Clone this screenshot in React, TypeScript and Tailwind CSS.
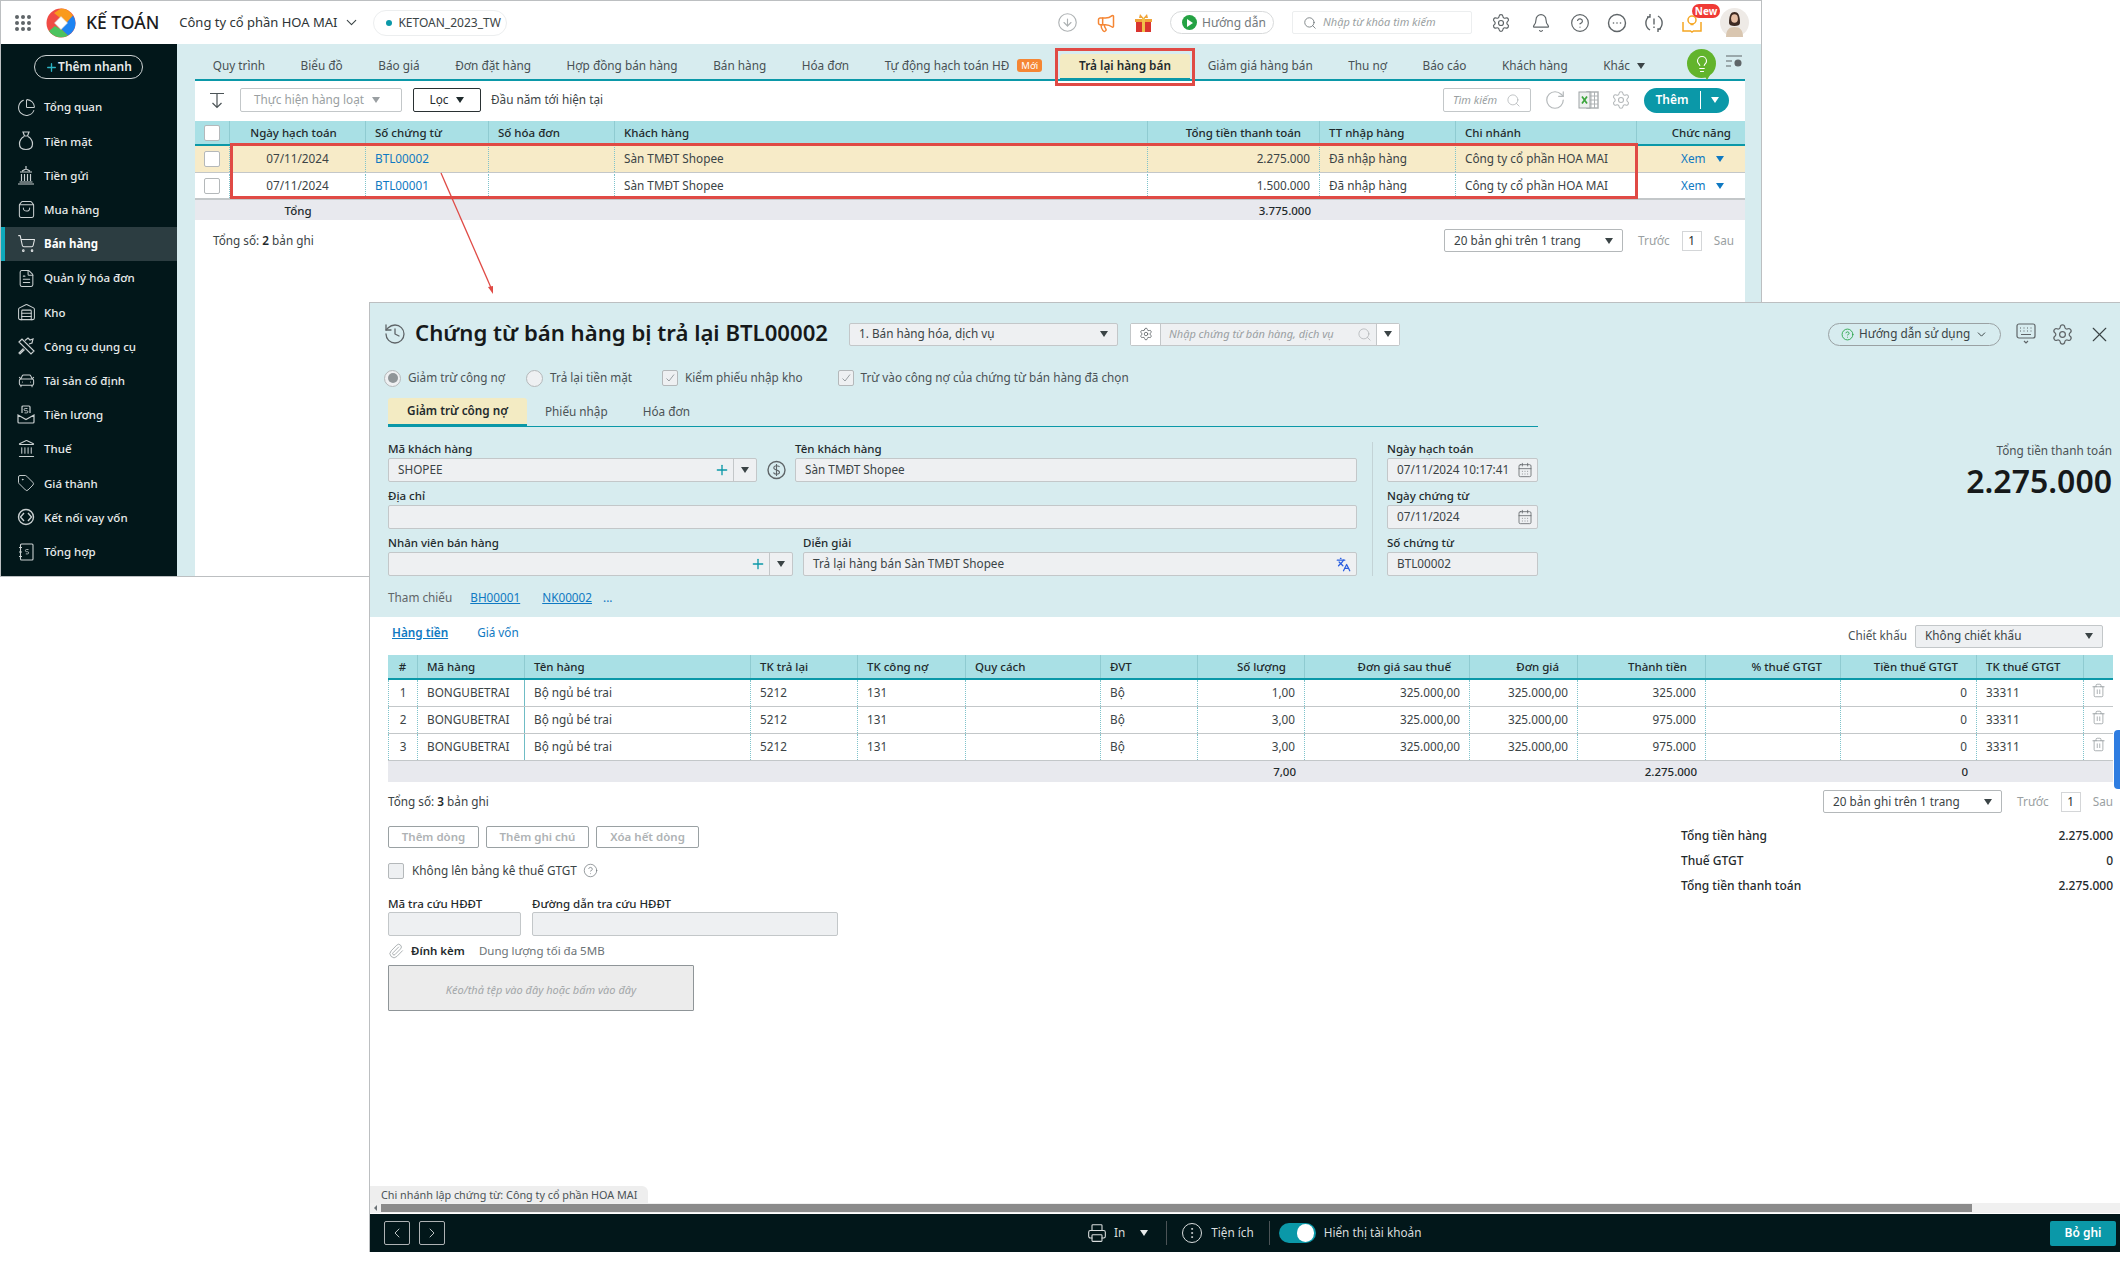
import { Bell, CalendarDays, CarFront, ChartPie, ChevronDown, ChevronLeft, ChevronRight, CircleArrowDown, CircleHelp, EllipsisVertical, FileText, History, Landmark, Languages, Lightbulb, Megaphone, Paperclip, Plus, Printer, RotateCw, Search, Settings, ShoppingBag, ShoppingCart, Tag, Trash2, Warehouse, X } from 'lucide-react'
import type { ReactNode } from 'react'

const thin = 1.3

function MoneyBag() {
  return (
    <svg width="16" height="20" viewBox="0 0 16 20" fill="none" stroke="#c9cfd0" strokeWidth="1.2">
      <path d="M5 1h6l-1.500 4h-3z" />
      <path d="M6 5.500C2.500 7.500 1.500 10.500 1.500 13c0 3.500 2.500 5.500 6.500 5.500s6.500-2 6.500-5.500c0-2.500-1-5.500-4.500-7.500" />
    </svg>
  )
}

function BankTower() {
  return (
    <svg width="18" height="20" viewBox="0 0 18 20" fill="none" stroke="#c9cfd0" strokeWidth="1.2">
      <path d="M9 1v3M3 7h12M5 6l4-2 4 2M4.500 9v7M7.500 9v7M10.500 9v7M13.500 9v7M2.500 17h13M1 19h16" />
    </svg>
  )
}

function HammerWrench() {
  return (
    <svg width="18" height="18" viewBox="0 0 18 18" fill="none" stroke="#c9cfd0" strokeWidth="1.2">
      <path d="M2 5l3-3 12 12-3 3zM8 3.500L11 1l2 2 3-1-1 4-3 1M6.500 11.500L2 16l1 1 4.500-4.500" />
    </svg>
  )
}

function SalaryBox() {
  return (
    <svg width="18" height="19" viewBox="0 0 18 19" fill="none" stroke="#c9cfd0" strokeWidth="1.2">
      <path d="M5 8V2a1 1 0 0 1 1-1h6a1 1 0 0 1 1 1v6" />
      <path d="M1 10v7a1 1 0 0 0 1 1h14a1 1 0 0 0 1-1v-7l-8 4.500z" />
      <path d="M10.500 3.500H8.200a1 1 0 0 0 0 2.200h1.600a1 1 0 0 1 0 2.200H7.500" strokeWidth="0.9" />
    </svg>
  )
}

function LoanLink() {
  return (
    <svg width="18" height="18" viewBox="0 0 18 18" fill="none" stroke="#c9cfd0" strokeWidth="1.4">
      <circle cx="9" cy="9" r="7.500" />
      <path d="M7 5L3.500 9 7 13M11 5l3.500 4-3.500 4" />
    </svg>
  )
}

function LedgerBook() {
  return (
    <svg width="16" height="18" viewBox="0 0 16 18" fill="none" stroke="#c9cfd0" strokeWidth="1.1">
      <rect x="2.500" y="1" width="12.500" height="16" rx="1" />
      <path d="M1 4.500h3M1 9h3M1 13.500h3" />
      <path d="M10.500 6.500H8.500a1 1 0 0 0 0 2.200h1a1 1 0 0 1 0 2.200H7.800" strokeWidth="0.8" />
    </svg>
  )
}

function Logo() {
  return (
    <svg width="30" height="30" viewBox="0 0 30 30">
      <circle cx="15" cy="15" r="14.500" fill="#f04b45" />
      <path d="M15 .5A14.500 14.500 0 0 1 27 8L20.500 15 8 5z" fill="#f99a1c" />
      <path d="M29.500 15A14.500 14.500 0 0 1 22 27.500L15 21l12-13.500a14 14 0 0 1 2.500 7.500z" fill="#1d84f2" />
      <path d="M22 27.500A14.500 14.500 0 0 1 3 23l6-5 7 4z" fill="#4cc35f" />
      <path d="M15 8.500l6.500 6.500-6.500 6.500L8.500 15z" fill="#fff" stroke="#d8d8d8" strokeWidth=".6" />
    </svg>
  )
}

function Avatar() {
  return (
    <svg width="29" height="29" viewBox="0 0 29 29">
      <circle cx="14.500" cy="14.500" r="14.500" fill="#eeeae6" />
      <path d="M9 15c0-8 2-11 5.500-11S20 7 20 15c0 2-2 3-5.500 3S9 17 9 15z" fill="#3d2a22" />
      <ellipse cx="14.500" cy="10.500" rx="3.400" ry="4.300" fill="#e6bfa5" />
      <path d="M6 29c0-7 3-10 8.500-10S23 22 23 29z" fill="#d9c6b0" />
    </svg>
  )
}

const SIDE = [
  { label: 'Tổng quan', icon: <ChartPie size={19} strokeWidth={thin} color="#c9cfd0" /> },
  { label: 'Tiền mặt', icon: <MoneyBag /> },
  { label: 'Tiền gửi', icon: <BankTower /> },
  { label: 'Mua hàng', icon: <ShoppingBag size={19} strokeWidth={thin} color="#c9cfd0" /> },
  { label: 'Bán hàng', icon: <ShoppingCart size={19} strokeWidth={thin} color="#e5e8e8" />, active: true },
  { label: 'Quản lý hóa đơn', icon: <FileText size={19} strokeWidth={thin} color="#c9cfd0" /> },
  { label: 'Kho', icon: <Warehouse size={19} strokeWidth={thin} color="#c9cfd0" /> },
  { label: 'Công cụ dụng cụ', icon: <HammerWrench /> },
  { label: 'Tài sản cố định', icon: <CarFront size={19} strokeWidth={thin} color="#c9cfd0" /> },
  { label: 'Tiền lương', icon: <SalaryBox /> },
  { label: 'Thuế', icon: <Landmark size={19} strokeWidth={thin} color="#c9cfd0" /> },
  { label: 'Giá thành', icon: <Tag size={18} strokeWidth={thin} color="#c9cfd0" /> },
  { label: 'Kết nối vay vốn', icon: <LoanLink /> },
  { label: 'Tổng hợp', icon: <LedgerBook /> },
]

const TABS = ['Quy trình', 'Biểu đồ', 'Báo giá', 'Đơn đặt hàng', 'Hợp đồng bán hàng', 'Bán hàng', 'Hóa đơn']
const TABS_AFTER = ['Giảm giá hàng bán', 'Thu nợ', 'Báo cáo', 'Khách hàng']

const BACK_ROWS = [
  { no: 'BTL00002', amount: '2.275.000', bg: 'bg-[#f7ebc8]' },
  { no: 'BTL00001', amount: '1.500.000', bg: 'bg-white' },
]

const ITEM_ROWS = [
  { n: 1, qty: '1,00', total: '325.000' },
  { n: 2, qty: '3,00', total: '975.000' },
  { n: 3, qty: '3,00', total: '975.000' },
]

const backCols = 'grid grid-cols-[35px_136px_123px_126px_533px_172px_136px_181px_107px]'
const itemCols = 'grid grid-cols-[30px_107px_226px_107px_108px_135px_97px_107px_165px_108px_128px_135px_136px_107px_29px]'
const headCell = 'flex items-center pl-[9px] border-r border-[#8fcbd1] text-[11.500px] font-medium text-[#1f2a2c]'
const headRight = 'flex items-center justify-end pr-[18px] border-r border-[#8fcbd1] text-[11.500px] font-medium text-[#1f2a2c]'
const bodyCell = 'flex items-center pl-[9px] border-r border-dotted border-[#7fc3cb] text-[#3b4446]'
const bodyRight = 'flex items-center justify-end pr-[9px] border-r border-dotted border-[#7fc3cb] text-[#3b4446]'
const bodyMid = 'flex items-center justify-center border-r border-dotted border-[#7fc3cb] text-[#3b4446]'

function Caret({ className = 'border-t-[#3b4446]' }: { className?: string }) {
  return <span className={`inline-block w-0 h-0 border-x-[4px] border-x-transparent border-t-[6px] ${className}`} />
}

function Pager() {
  return (
    <div className="flex items-center text-[11.750px] text-[#3b4446]">
      <div className="flex items-center justify-between h-[23px] w-[179px] border border-[#b4b8ba] rounded-[2px] px-[9px] bg-white">
        <span>20 bản ghi trên 1 trang</span>
        <Caret />
      </div>
      <span className="ml-[15px] text-[#9a9fa2]">Trước</span>
      <span className="ml-[12px] w-[20px] h-[20px] flex items-center justify-center border border-[#d4d6d8] text-[#1f2a2c]">1</span>
      <span className="ml-[12px] text-[#9a9fa2]">Sau</span>
    </div>
  )
}

function Field({ label, className, children }: { label: string; className?: string; children?: ReactNode }) {
  return (
    <div className={className}>
      <div className="h-[16px] leading-[14px] text-[11.500px] font-medium text-[#1f2a2c]">{label}</div>
      <div className="flex items-center h-[24px] bg-[#eef0f2] border border-[#c3c7c9] rounded-[2px] text-[11.750px] text-[#3b4446]">
        {children}
      </div>
    </div>
  )
}

function TopBar() {
  return (
    <div className="flex items-center h-[43px] bg-white pl-[14px] pr-[12px] text-[#3b4446]">
      <div className="grid grid-cols-3 gap-[2px] w-[16px]">
        {[...Array(9)].map((_, i) => (
          <span key={i} className="w-[4px] h-[4px] rounded-full bg-[#5f6568]" />
        ))}
      </div>
      <div className="ml-[15px]"><Logo /></div>
      <span className="ml-[10px] text-[17.500px] font-medium text-[#1c1c1c]">KẾ TOÁN</span>
      <span className="ml-[20px] text-[13px] text-[#2d3436]">Công ty cổ phần HOA MAI</span>
      <ChevronDown size={17} strokeWidth={1.5} className="ml-[6px]" />
      <div className="ml-[13px] flex items-center h-[26px] w-[134px] border border-[#eceeef] rounded-full pl-[12px] text-[12px]">
        <span className="w-[6px] h-[6px] rounded-full bg-[#0b98a8]" />
        <span className="ml-[6px]">KETOAN_2023_TW</span>
      </div>
      <CircleArrowDown size={21} strokeWidth={1.3} color="#aeb2b4" className="ml-auto" />
      <Megaphone size={20} strokeWidth={1.8} color="#f58634" className="ml-[18px]" />
      <svg width="19" height="20" viewBox="0 0 19 20" className="ml-[18px]">
        <path d="M1 6h17v3H1z" fill="#f0a43a" />
        <path d="M2 9h15v10H2z" fill="#d9342f" />
        <path d="M8 5h3v14H8z" fill="#f0c04a" />
        <path d="M9.500 5L6 1 5 5zM9.500 5L13 1l1 4z" fill="#f0a43a" />
      </svg>
      <div className="ml-[17px] flex items-center h-[23px] w-[104px] border border-[#d8dadb] rounded-full pl-[11px] text-[12px] text-[#73797c]">
        <span className="w-[15px] h-[15px] rounded-full bg-[#25a244] flex items-center justify-center">
          <span className="w-0 h-0 border-y-[4px] border-y-transparent border-l-[6px] border-l-white ml-[1px]" />
        </span>
        <span className="ml-[5px]">Hướng dẫn</span>
      </div>
      <div className="ml-[18px] flex items-center h-[23px] w-[180px] border border-[#eceeef] rounded-[2px] pl-[10px] text-[11px] italic text-[#9a9fa2]">
        <Search size={14} strokeWidth={1.4} color="#6b7276" />
        <span className="ml-[6px]">Nhập từ khóa tìm kiếm</span>
      </div>
      <Settings size={20} strokeWidth={1.4} color="#5f6568" className="ml-[19px]" />
      <Bell size={20} strokeWidth={1.4} color="#5f6568" className="ml-[20px]" />
      <CircleHelp size={20} strokeWidth={1.4} color="#5f6568" className="ml-[19px]" />
      <svg width="20" height="20" viewBox="0 0 20 20" fill="none" stroke="#5f6568" strokeWidth="1.4" className="ml-[17px]">
        <circle cx="10" cy="10" r="8.500" />
        <circle cx="6.500" cy="10" r=".8" fill="#5f6568" stroke="none" />
        <circle cx="10" cy="10" r=".8" fill="#5f6568" stroke="none" />
        <circle cx="13.500" cy="10" r=".8" fill="#5f6568" stroke="none" />
      </svg>
      <svg width="20" height="20" viewBox="0 0 20 20" fill="none" stroke="#5f6568" strokeWidth="1.4" className="ml-[17px]">
        <path d="M6 3a8 8 0 0 0 0 14M14 3a8 8 0 0 1 0 14M6 1v3H3M14 19v-3h3M10 5.500v6M10 13.500v1.500" />
      </svg>
      <div className="relative ml-[18px] mr-[19px] w-[19px] h-[20px]">
        <svg width="20" height="20" viewBox="0 0 20 20" fill="none" stroke="#f5a623" strokeWidth="1.5">
          <circle cx="10" cy="7" r="4" />
          <path d="M8.500 11.500h3M1 9v9h7.500l1.500 1 1.500-1H19V9" />
        </svg>
        <span className="absolute left-[10px] top-[-9px] w-[28px] h-[14px] rounded-full bg-[#f03a35] text-white text-[10px] font-bold leading-[14px] text-center">New</span>
      </div>
      <Avatar />
    </div>
  )
}

function Sidebar() {
  return (
    <aside className="w-[176px] bg-[#02171a] text-[#e8ebeb] text-[11.500px] font-medium flex flex-col">
      <div className="h-[24px] mt-[11px] ml-[33px] w-[109px] border border-[#cfd4d5] rounded-full flex items-center justify-center text-[12px] font-semibold">
        <Plus size={13} strokeWidth={2.5} color="#2cb4c4" />
        <span>Thêm nhanh</span>
      </div>
      <div className="mt-[11px] flex flex-col">
        {SIDE.map(item => (
          <div
            key={item.label}
            className={
              item.active
                ? 'flex items-center h-[34.200px] bg-[#2c3d41] border-l-[4px] border-[#0fa9bb] pl-[11px] font-bold text-white'
                : 'flex items-center h-[34.200px] pl-[15px]'
            }
          >
            <span className="w-[20px] flex justify-center">{item.icon}</span>
            <span className="ml-[8px]">{item.label}</span>
          </div>
        ))}
      </div>
    </aside>
  )
}

function BackWindow() {
  return (
    <div className="relative w-[1762px] h-[577px] border border-[#bcbfc1] flex flex-col overflow-hidden">
      <TopBar />
      <div className="flex flex-1 min-h-0">
        <Sidebar />
        <div className="flex-1 bg-[#d7ecef] pl-[18px] pr-[16px] flex flex-col">
          <div className="flex items-end h-[37px] border-b-[2px] border-[#0b98a8] text-[11.800px] text-[#485154] whitespace-nowrap">
            {TABS.map(t => (
              <div key={t} className="h-[27px] flex items-center px-[17.750px]">{t}</div>
            ))}
            <div className="h-[27px] flex items-center px-[17.750px]">
              Tự động hạch toán HĐ
              <span className="ml-[8px] px-[4px] h-[13px] leading-[13px] rounded-[3px] bg-[#f58634] text-white text-[9.500px]">Mới</span>
            </div>
            <div className="h-[27px] w-[130px] flex items-center justify-center bg-[#f3ebc3] rounded-t-[3px] border-b-[3px] border-[#0b98a8] mb-[-2px] font-semibold text-[#1f2a2c]">Trả lại hàng bán</div>
            {TABS_AFTER.map(t => (
              <div key={t} className="h-[27px] flex items-center px-[17.750px]">{t}</div>
            ))}
            <div className="h-[27px] flex items-center pl-[17.750px]">
              Khác
              <Caret className="ml-[7px] border-t-[#3b4446]" />
            </div>
            <div className="relative h-[31px] mb-[-1px] ml-auto w-[29px]">
              <span className="flex items-center justify-center w-[29px] h-[29px] rounded-full bg-[#62b42c]">
                <Lightbulb size={18} strokeWidth={1.5} color="#fff" />
              </span>
              <span className="absolute left-[17px] bottom-[0px] w-0 h-0 border-x-[3px] border-x-transparent border-t-[5px] border-t-[#62b42c]" />
            </div>
            <svg width="18" height="14" viewBox="0 0 18 14" fill="none" stroke="#5f6568" strokeWidth="1.1" className="ml-[9px] mr-[2px] mb-[10px]">
              <path d="M1 1h16M1 6h6M1 11h5" />
              <circle cx="13" cy="8" r="3" fill="#5f6568" />
            </svg>
          </div>
          <div className="flex-1 bg-white flex flex-col">
            <div className="flex items-center h-[40px] pb-[2px] text-[11.750px]">
              <svg width="16" height="17" viewBox="0 0 16 17" fill="none" stroke="#4b5356" strokeWidth="1.2" className="ml-[14px]">
                <path d="M1 1.500h14M8 1.500v14M3.500 11l4.500 4.500 4.500-4.500" />
              </svg>
              <div className="ml-[15px] flex items-center justify-center h-[24px] w-[162px] pr-[8px] border border-[#c3c7c9] rounded-[2px] text-[#9a9fa2]">
                Thực hiện hàng loạt
                <Caret className="ml-[8px] border-t-[#9a9fa2]" />
              </div>
              <div className="ml-[11px] flex items-center justify-center h-[24px] w-[68px] border border-[#2a3133] rounded-[2px] text-[#1f2a2c]">
                Lọc
                <Caret className="ml-[8px] border-t-[#1f2a2c]" />
              </div>
              <span className="ml-[10px] text-[#3b4446]">Đầu năm tới hiện tại</span>
              <div className="ml-auto flex items-center justify-between h-[24px] w-[88px] border border-[#c3c7c9] rounded-[2px] px-[9px] text-[11px] italic text-[#9a9fa2]">
                Tìm kiếm
                <Search size={15} strokeWidth={1.2} color="#aeb2b4" />
              </div>
              <RotateCw size={22} strokeWidth={1.3} color="#b4b8ba" className="ml-[13px]" />
              <svg width="21" height="20" viewBox="0 0 21 20" className="ml-[12px]">
                <rect x="9" y="2" width="11" height="16" fill="none" stroke="#aeb2b4" strokeWidth="1.500" />
                <path d="M13 2v16M16.500 2v16M9 6h11M9 10h11M9 14h11" stroke="#aeb2b4" />
                <rect x="1" y="2" width="11" height="16" fill="#eef0f0" stroke="#9ea3a5" />
                <path d="M4 6.500l5 7M9 6.500l-5 7" stroke="#3ba53b" strokeWidth="1.700" />
              </svg>
              <Settings size={20} strokeWidth={1.3} color="#b4b8ba" className="ml-[12px]" />
              <div className="ml-[13px] mr-[16px] flex items-center h-[25px] w-[85px] rounded-full bg-[#0b98a8] text-[12px] text-white font-semibold">
                <span className="w-[57px] text-center border-r border-white">Thêm</span>
                <Caret className="ml-[10px] border-t-white" />
              </div>
            </div>
            <div className="relative text-[11.750px]">
              <div className={`${backCols} h-[25px] bg-[#a9e0e5] border-b-[2px] border-[#0b98a8]`}>
                <div className="flex items-center justify-center border-r border-[#8fcbd1]">
                  <span className="w-[16px] h-[16px] bg-white border border-[#b4b8ba] rounded-[2px]" />
                </div>
                <div className="flex items-center justify-center pr-[8px] border-r border-[#8fcbd1] text-[11.500px] font-medium text-[#1f2a2c]">Ngày hạch toán</div>
                <div className={headCell}>Số chứng từ</div>
                <div className={headCell}>Số hóa đơn</div>
                <div className={headCell}>Khách hàng</div>
                <div className={headRight}>Tổng tiền thanh toán</div>
                <div className={headCell}>TT nhập hàng</div>
                <div className={headCell}>Chi nhánh</div>
                <div className="flex items-center justify-end pr-[13px] text-[11.500px] font-medium text-[#1f2a2c]">Chức năng</div>
              </div>
              {BACK_ROWS.map(r => (
                <div key={r.no} className={`${backCols} h-[26.500px] pt-[1px] border-b border-[#c3c7c9] ${r.bg}`}>
                  <div className={bodyMid}>
                    <span className="w-[16px] h-[16px] bg-white border border-[#b4b8ba] rounded-[2px]" />
                  </div>
                  <div className={bodyMid}>07/11/2024</div>
                  <div className="flex items-center pl-[9px] border-r border-dotted border-[#7fc3cb] text-[#0f79c2]">{r.no}</div>
                  <div className={bodyCell} />
                  <div className={bodyCell}>Sàn TMĐT Shopee</div>
                  <div className={bodyRight}>{r.amount}</div>
                  <div className={bodyCell}>Đã nhập hàng</div>
                  <div className={bodyCell}>Công ty cổ phần HOA MAI</div>
                  <div className="flex items-center pl-[44px] text-[#0f79c2]">
                    Xem
                    <Caret className="ml-[10px] border-t-[#0f79c2]" />
                  </div>
                </div>
              ))}
              <div className={`${backCols} h-[21px] pt-[1px] bg-[#e8e9ee] border-t border-[#c3c7c9] text-[11.500px] font-medium text-[#1f2a2c]`}>
                <div />
                <div className="flex items-center justify-center">Tổng</div>
                <div />
                <div />
                <div />
                <div className="flex items-center justify-end pr-[9px]">3.775.000</div>
              </div>
              {/* annotation frame round the two rows */}
              <div className="absolute left-[35px] top-[22px] w-[1408px] h-[56px] border-[3px] border-[#e04a45]" />
            </div>
            <div className="flex items-center justify-between mt-[9px] pl-[18px] pr-[11px] text-[11.750px] text-[#3b4446]">
              <span>Tổng số: <b className="font-semibold text-[#1f2a2c]">2</b> bản ghi</span>
              <Pager />
            </div>
          </div>
        </div>
      </div>
      {/* annotation frame round the active tab */}
      <div className="absolute left-[1054px] top-[47px] w-[140px] h-[38px] border-[3px] border-[#e04a45]" />
    </div>
  )
}

function FrontHeader() {
  return (
    <div className="flex items-center h-[24px] mt-[19px]">
      <History size={24} strokeWidth={1.3} color="#5f6568" className="ml-[-5px]" />
      <span className="ml-[8px] mb-[5px] text-[22.150px] font-semibold leading-[24px] text-[#16191a]">Chứng từ bán hàng bị trả lại BTL00002</span>
      <div className="ml-[21px] flex items-center justify-between w-[269px] h-[23px] bg-[#eef0f2] border border-[#c3c7c9] rounded-[2px] px-[9px] text-[11.750px] text-[#3b4446]">
        1. Bán hàng hóa, dịch vụ
        <Caret />
      </div>
      <div className="ml-[12px] flex items-center h-[23px] w-[270px] bg-[#eef0f2] border border-[#c3c7c9] rounded-[2px] text-[11px] italic text-[#9a9fa2]">
        <span className="flex items-center justify-center w-[30px] h-full bg-white border-r border-[#c3c7c9]">
          <Settings size={14} strokeWidth={1.4} color="#5f6568" />
        </span>
        <span className="ml-[8px] flex-1">Nhập chứng từ bán hàng, dịch vụ</span>
        <Search size={15} strokeWidth={1.2} color="#aeb2b4" />
        <span className="ml-[4px] flex items-center justify-center w-[23px] h-full bg-white border-l border-[#c3c7c9]">
          <Caret />
        </span>
      </div>
      <div className="ml-auto flex items-center h-[23px] w-[173px] border border-[#9aa1a3] rounded-full pl-[12px] text-[11.750px] text-[#3b4446]">
        <CircleHelp size={13} strokeWidth={1.6} color="#25a244" />
        <span className="ml-[5px]">Hướng dẫn sử dụng</span>
        <ChevronDown size={13} strokeWidth={1.8} className="ml-[5px]" />
      </div>
      <svg width="20" height="22" viewBox="0 0 20 22" fill="none" stroke="#5f6568" strokeWidth="1.2" className="ml-[15px]">
        <rect x="1" y="1" width="18" height="14" rx="2" />
        <path d="M4 5h1M7.500 5h1M11 5h1M14.500 5h1M4 8h1M7.500 8h1M11 8h1M14.500 8h1M5 11.500h10M8 18l2 2 2-2" />
      </svg>
      <Settings size={23} strokeWidth={1.3} color="#5f6568" className="ml-[15px]" />
      <X size={25} strokeWidth={1.1} color="#3b4446" className="ml-[13px]" />
    </div>
  )
}

function Check({ label, className }: { label: string; className: string }) {
  return (
    <div className={`flex items-center ${className}`}>
      <span className="flex items-center justify-center w-[16px] h-[16px] bg-[#eef0f2] border border-[#b4b8ba] rounded-[2px]">
        <svg width="10" height="10" viewBox="0 0 10 10" fill="none" stroke="#8f9598" strokeWidth="0.9"><path d="M1.500 5.500l2.500 2.500 5-6.500" /></svg>
      </span>
      <span className="ml-[7px]">{label}</span>
    </div>
  )
}

function FrontForm() {
  return (
    <div className="w-[1150px]">
      <div className="flex items-center h-[16px] mt-[24px] ml-[-4px] text-[11.750px] text-[#4b5356]">
        <span className="flex items-center justify-center w-[17px] h-[17px] rounded-full border border-[#b4b8ba] bg-[#eef0f2]">
          <span className="w-[10px] h-[10px] rounded-full bg-[#8f9598]" />
        </span>
        <span className="ml-[7px]">Giảm trừ công nợ</span>
        <span className="ml-[21px] w-[17px] h-[17px] rounded-full border border-[#b4b8ba] bg-[#eef0f2]" />
        <span className="ml-[7px]">Trả lại tiền mặt</span>
        <Check label="Kiểm phiếu nhập kho" className="ml-[30px]" />
        <Check label="Trừ vào công nợ của chứng từ bán hàng đã chọn" className="ml-[35px]" />
      </div>
      <div className="flex items-end h-[29px] mt-[12px] border-b border-[#0b98a8] text-[11.750px] text-[#4b5356]">
        <div className="flex items-center justify-center h-[29px] w-[139px] bg-[#f3ebc3] rounded-t-[3px] border-b-[3px] border-[#0b98a8] mb-[-1px] font-semibold text-[#1f2a2c]">Giảm trừ công nợ</div>
        <div className="h-[28px] flex items-center ml-[18px]">Phiếu nhập</div>
        <div className="h-[28px] flex items-center ml-[35px]">Hóa đơn</div>
      </div>
      <div className="flex mt-[15px]">
        <div className="w-[969px] flex flex-col">
          <div className="flex">
            <Field label="Mã khách hàng" className="w-[369px]">
              <span className="flex-1 pl-[9px]">SHOPEE</span>
              <Plus size={16} strokeWidth={2} color="#0b98a8" className="mr-[3px]" />
              <span className="flex items-center justify-center w-[23px] h-full border-l border-[#c3c7c9]"><Caret /></span>
            </Field>
            <div className="w-[38px] flex justify-center items-end pb-[2px]">
              <svg width="19" height="20" viewBox="0 0 19 20" fill="none" stroke="#5f6568">
                <circle cx="9.500" cy="10" r="8.500" strokeWidth="1.400" />
                <path d="M12.500 7c-.5-1.500-5.500-2-5.700.7C6.600 10.500 12.600 9.500 12.500 12.500c-.1 2.500-5.500 2-6 0M9.500 4v12" strokeWidth="1.100" />
              </svg>
            </div>
            <Field label="Tên khách hàng" className="w-[562px]">
              <span className="pl-[9px]">Sàn TMĐT Shopee</span>
            </Field>
          </div>
          <Field label="Địa chỉ" className="mt-[7px]" />
          <div className="flex mt-[7px]">
            <Field label="Nhân viên bán hàng" className="w-[405px]">
              <span className="flex-1" />
              <Plus size={16} strokeWidth={2} color="#0b98a8" className="mr-[3px]" />
              <span className="flex items-center justify-center w-[23px] h-full border-l border-[#c3c7c9]"><Caret /></span>
            </Field>
            <Field label="Diễn giải" className="ml-[10px] w-[554px]">
              <span className="flex-1 pl-[9px]">Trả lại hàng bán Sàn TMĐT Shopee</span>
              <Languages size={15} strokeWidth={2} color="#2a5fe0" className="mr-[5px]" />
            </Field>
          </div>
        </div>
        <div className="ml-[15px] w-px bg-[#c3d3d6]" />
        <div className="ml-[14px] w-[151px] flex flex-col">
          <Field label="Ngày hạch toán">
            <span className="flex-1 pl-[9px]">07/11/2024 10:17:41</span>
            <CalendarDays size={16} strokeWidth={1.2} color="#5f6568" className="mr-[4px]" />
          </Field>
          <Field label="Ngày chứng từ" className="mt-[7px]">
            <span className="flex-1 pl-[9px]">07/11/2024</span>
            <CalendarDays size={16} strokeWidth={1.2} color="#5f6568" className="mr-[4px]" />
          </Field>
          <Field label="Số chứng từ" className="mt-[7px]">
            <span className="pl-[9px]">BTL00002</span>
          </Field>
        </div>
      </div>
      <div className="flex items-center h-[16px] mt-[14px] text-[11.750px] text-[#5f6568]">
        Tham chiếu
        <span className="ml-[18px] text-[#0f79c2] underline">BH00001</span>
        <span className="ml-[22px] text-[#0f79c2] underline">NK00002</span>
        <span className="ml-[11px] text-[#0f79c2]">...</span>
      </div>
    </div>
  )
}

function ItemsTable() {
  return (
    <div className="text-[11.750px]">
      <div className={`${itemCols} h-[25px] bg-[#a9e0e5] border-b-[2px] border-[#0b98a8]`}>
        <div className="flex items-center justify-center border-r border-[#8fcbd1] text-[11.500px] font-medium text-[#1f2a2c]">#</div>
        <div className={headCell}>Mã hàng</div>
        <div className={headCell}>Tên hàng</div>
        <div className={headCell}>TK trả lại</div>
        <div className={headCell}>TK công nợ</div>
        <div className={headCell}>Quy cách</div>
        <div className={headCell}>ĐVT</div>
        <div className={headRight}>Số lượng</div>
        <div className={headRight}>Đơn giá sau thuế</div>
        <div className={headRight}>Đơn giá</div>
        <div className={headRight}>Thành tiền</div>
        <div className={headRight}>% thuế GTGT</div>
        <div className={headRight}>Tiền thuế GTGT</div>
        <div className={headCell}>TK thuế GTGT</div>
        <div />
      </div>
      {ITEM_ROWS.map(r => (
        <div key={r.n} className={`${itemCols} h-[27px] border-b border-[#c3c7c9]`}>
          <div className={`${bodyMid} border-l`}>{r.n}</div>
          <div className="flex items-center pl-[9px] border-r border-[#6fbcc5] text-[#3b4446]">BONGUBETRAI</div>
          <div className={bodyCell}>Bộ ngủ bé trai</div>
          <div className={bodyCell}>5212</div>
          <div className={bodyCell}>131</div>
          <div className={bodyCell} />
          <div className={bodyCell}>Bộ</div>
          <div className={bodyRight}>{r.qty}</div>
          <div className={bodyRight}>325.000,00</div>
          <div className={bodyRight}>325.000,00</div>
          <div className={bodyRight}>{r.total}</div>
          <div className={bodyCell} />
          <div className={bodyRight}>0</div>
          <div className={bodyCell}>33311</div>
          <div className="flex justify-center pt-[3px]">
            <Trash2 size={15} strokeWidth={1} color="#7c8386" />
          </div>
        </div>
      ))}
      <div className={`${itemCols} h-[21px] bg-[#e8e9ee] text-[11.500px] font-medium text-[#1f2a2c]`}>
        <div className="col-start-8 flex items-center justify-end pr-[9px]">7,00</div>
        <div />
        <div />
        <div className="flex items-center justify-end pr-[9px]">2.275.000</div>
        <div />
        <div className="flex items-center justify-end pr-[9px]">0</div>
      </div>
    </div>
  )
}

function FrontWindow() {
  return (
    <div className="absolute left-[369px] top-[302px] w-[1751px] h-[950px] bg-white border-l border-t border-[#bcbfc1] flex flex-col">
      <div className="h-[314px] bg-[#d7ecef] pl-[18px] pr-[8px] flex flex-col">
        <FrontHeader />
        <div className="flex">
          <FrontForm />
          <div className="flex-1 flex flex-col items-end pt-[96px]">
            <span className="text-[11.750px] text-[#4b5356]">Tổng tiền thanh toán</span>
            <span className="text-[32px] leading-[42px] font-semibold text-[#16191a]">2.275.000</span>
          </div>
        </div>
      </div>
      <div className="relative flex-1 pl-[18px] pr-[7px] flex flex-col">
        <div className="flex items-center h-[38px]">
          <span className="ml-[4px] mb-[7px] text-[11.750px] font-semibold text-[#0f79c2] underline">Hàng tiền</span>
          <span className="ml-[29px] mb-[7px] text-[11.750px] text-[#0f79c2]">Giá vốn</span>
          <span className="ml-auto text-[11.750px] text-[#4b5356]">Chiết khấu</span>
          <div className="ml-[8px] mr-[10px] flex items-center justify-between w-[188px] h-[23px] bg-[#eef0f2] border border-[#c3c7c9] rounded-[2px] px-[9px] text-[11.750px] text-[#3b4446]">
            Không chiết khấu
            <Caret />
          </div>
        </div>
        <ItemsTable />
        <div className="flex items-center justify-between mt-[8px] text-[11.750px] text-[#3b4446]">
          <span>Tổng số: <b className="font-semibold text-[#1f2a2c]">3</b> bản ghi</span>
          <Pager />
        </div>
        <div className="flex justify-between">
          <div className="w-[720px] flex flex-col">
            <div className="flex gap-[7px] mt-[13px] text-[11.500px] font-semibold text-[#aeb2b4]">
              <span className="flex items-center justify-center w-[91px] h-[22px] border border-[#9aa1a3] rounded-[2px]">Thêm dòng</span>
              <span className="flex items-center justify-center w-[103px] h-[22px] border border-[#9aa1a3] rounded-[2px]">Thêm ghi chú</span>
              <span className="flex items-center justify-center w-[103px] h-[22px] border border-[#9aa1a3] rounded-[2px]">Xóa hết dòng</span>
            </div>
            <div className="flex items-center mt-[14px] text-[11.750px] text-[#3b4446]">
              <span className="w-[16px] h-[16px] bg-[#eef0f2] border border-[#b4b8ba] rounded-[2px]" />
              <span className="ml-[8px]">Không lên bảng kê thuế GTGT</span>
              <CircleHelp size={15} strokeWidth={1.1} color="#6b7276" className="ml-[6px]" />
            </div>
            <div className="flex mt-[15px]">
              <div className="w-[133px]">
                <div className="h-[17px] leading-[17px] text-[11.500px] font-medium text-[#1f2a2c]">Mã tra cứu HĐĐT</div>
                <div className="h-[24px] bg-[#eef0f2] border border-[#c3c7c9] rounded-[2px]" />
              </div>
              <div className="ml-[11px] w-[306px]">
                <div className="h-[17px] leading-[17px] text-[11.500px] font-medium text-[#1f2a2c]">Đường dẫn tra cứu HĐĐT</div>
                <div className="h-[24px] bg-[#eef0f2] border border-[#c3c7c9] rounded-[2px]" />
              </div>
            </div>
            <div className="flex items-center h-[16px] mt-[7px] text-[11.500px]">
              <Paperclip size={16} strokeWidth={1.1} color="#8f9598" />
              <span className="ml-[7px] font-semibold text-[#1f2a2c]">Đính kèm</span>
              <span className="ml-[14px] text-[#6b7276]">Dung lượng tối đa 5MB</span>
            </div>
            <div className="flex items-center justify-center w-[306px] h-[46px] mt-[6px] pt-[6px] bg-[#ececec] border border-[#8f9598] rounded-[1px] text-[11px] italic text-[#a2a6a8]">
              Kéo/thả tệp vào đây hoặc bấm vào đây
            </div>
          </div>
          <div className="w-[432px] mt-[10px] text-[12px] font-medium text-[#1f2a2c]">
            <div className="flex justify-between h-[25px] items-center"><span>Tổng tiền hàng</span><span>2.275.000</span></div>
            <div className="flex justify-between h-[25px] items-center"><span>Thuế GTGT</span><span>0</span></div>
            <div className="flex justify-between h-[25px] items-center"><span>Tổng tiền thanh toán</span><span>2.275.000</span></div>
          </div>
        </div>
        {/* side handle pinned to the window edge */}
        <div className="absolute right-0 top-[113px] w-[6px] h-[59px] bg-[#2f7de1] rounded-l-[4px]" />
        <div className="mt-auto ml-[-18px] mr-[-7px] flex flex-col">
          <div className="w-[278px] h-[17px] bg-[#eeeeee] rounded-tr-[6px] pl-[11px] text-[10.800px] leading-[17px] text-[#4b5356] whitespace-nowrap">Chi nhánh lập chứng từ: Công ty cổ phần HOA MAI</div>
          <div className="flex items-center h-[10px] bg-[#f0f0f0]">
            <span className="ml-[4px] mr-[4px] w-0 h-0 border-y-[3px] border-y-transparent border-r-[3px] border-r-[#6b7276]" />
            <span className="w-[1591px] h-[8px] bg-[#8b8b8b]" />
          </div>
          <div className="flex items-center h-[38px] mt-[1px] bg-[#02171a] text-[11.750px] text-[#d9dddd]">
            <span className="ml-[14px] flex items-center justify-center w-[26px] h-[24px] border border-[#aeb2b4] rounded-[2px]"><ChevronLeft size={16} strokeWidth={1.3} /></span>
            <span className="ml-[9px] flex items-center justify-center w-[26px] h-[24px] border border-[#aeb2b4] rounded-[2px]"><ChevronRight size={16} strokeWidth={1.3} /></span>
            <Printer size={20} strokeWidth={1.3} className="ml-[642px]" />
            <span className="ml-[7px]">In</span>
            <Caret className="ml-[15px] border-t-[#e8ebeb]" />
            <span className="ml-[18px] w-px h-[24px] bg-[#4b5356]" />
            <span className="ml-[15px] flex items-center justify-center w-[20px] h-[20px] rounded-full border border-[#d9dddd]"><EllipsisVertical size={14} strokeWidth={1.5} /></span>
            <span className="ml-[9px]">Tiện ích</span>
            <span className="ml-[15px] w-px h-[24px] bg-[#4b5356]" />
            <span className="ml-[9px] flex items-center justify-end w-[37px] h-[20px] rounded-full bg-[#0b98a8] pr-[2px]">
              <span className="w-[17px] h-[18px] rounded-full bg-white" />
            </span>
            <span className="ml-[8px]">Hiển thị tài khoản</span>
            <span className="ml-auto mr-[4px] flex items-center justify-center w-[66px] h-[25px] bg-[#0b98a8] rounded-[2px] text-[12px] text-white font-semibold">Bỏ ghi</span>
          </div>
        </div>
      </div>
    </div>
  )
}

export default function App() {
  return (
    <div className="relative w-[2120px] h-[1281px] bg-white overflow-hidden font-['Noto_Sans',sans-serif]">
      <BackWindow />
      <FrontWindow />
      {/* red arrow from the selected row down to the opened document */}
      <svg width="70" height="130" viewBox="0 0 70 130" className="absolute left-[435px] top-[170px]">
        <path d="M6 3L57 120" stroke="#e04a45" strokeWidth="1.300" fill="none" />
        <path d="M58 124l-5-7 5-1z" fill="#e04a45" />
      </svg>
    </div>
  )
}
